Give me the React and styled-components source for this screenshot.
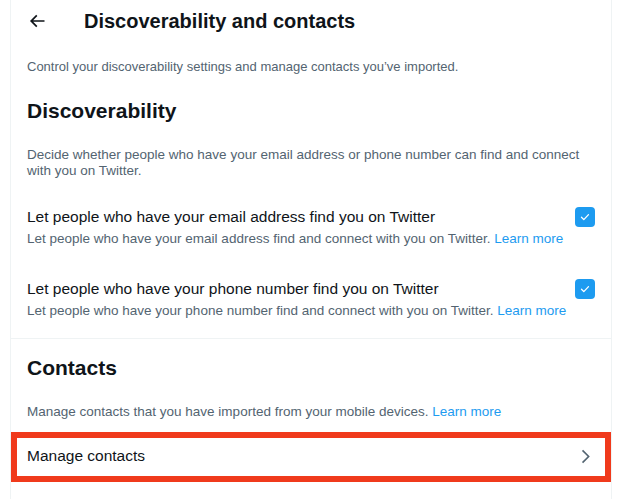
import { createGlobalStyle, styled } from 'styled-components'

const colors = {
    text: '#0f1419',
    secondary: '#536471',
    blue: '#1d9bf0',
    border: '#eff3f4',
    highlight: '#f03a1c',
}

const GlobalStyle = createGlobalStyle`
  body {
    margin: 0;
    background: #ffffff;
    font-family: "Liberation Sans", Arial, sans-serif;
    color: ${colors.text};
  }
`

const Page = styled.div`
    width: 600px;
    min-height: 499px;
    margin-left: 10px;
    border-left: 1px solid ${colors.border};
    border-right: 1px solid ${colors.border};
    box-sizing: content-box;
`
const Header = styled.header`
    height: 41px;
    display: flex;
    align-items: center;
    padding: 0 16px;
    gap: 37px;
`
const BackButton = styled.button`
    width: 20px;
    height: 20px;
    padding: 0;
    border: none;
    background: none;
    display: flex;
    align-items: center;
    justify-content: center;
    color: ${colors.text};
    cursor: pointer;
`
const PageTitle = styled.h1`
    margin: 0;
    font-size: 20px;
    line-height: 24px;
    font-weight: 700;
`
const Intro = styled.p`
    margin: 0;
    padding: 18px 16px 7px;
    font-size: 13px;
    line-height: 16px;
    color: ${colors.secondary};
`
const Section = styled.section`
    border-top: ${({ $divided }) => ($divided ? `1px solid ${colors.border}` : 'none')};
    padding-bottom: ${({ $divided }) => ($divided ? '0' : '3px')};
`
const SectionTitle = styled.h2`
    margin: 0;
    padding: 17px 16px 12px;
    font-size: 21px;
    line-height: 24px;
    font-weight: 700;
`
const SectionText = styled.p`
    margin: 0;
    padding: 12px 16px;
    font-size: 13.5px;
    line-height: 16px;
    color: ${colors.secondary};
`
const Link = styled.a`
    color: ${colors.blue};
    text-decoration: none;
`
const Option = styled.label`
    display: flex;
    align-items: flex-start;
    gap: 8px;
    padding: 16px;
    cursor: pointer;
`
const OptionBody = styled.div`
    flex: 1;
    display: flex;
    flex-direction: column;
    gap: 4px;
`
const OptionLabel = styled.span`
    font-size: 15.5px;
    line-height: 20px;
`
const OptionHint = styled.span`
    font-size: 13.5px;
    line-height: 16px;
    color: ${colors.secondary};
`
const Checkbox = styled.span`
    width: 20px;
    height: 20px;
    border-radius: 4px;
    background: ${({ $checked }) => ($checked ? colors.blue : 'transparent')};
    border: ${({ $checked }) => ($checked ? 'none' : `2px solid ${colors.secondary}`)};
    display: flex;
    align-items: center;
    justify-content: center;
    flex-shrink: 0;
`
const LinkRow = styled.a`
    display: flex;
    align-items: center;
    justify-content: space-between;
    padding: 14px 16px 16px;
    font-size: 15.5px;
    line-height: 20px;
    color: ${colors.text};
    text-decoration: none;
    box-shadow: ${({ $highlighted }) => ($highlighted ? `inset 0 0 0 6px ${colors.highlight}` : 'none')};
    cursor: pointer;
`

function ArrowLeft() {
    return (
        <svg width="20" height="20" viewBox="0 0 24 24" fill="currentColor">
            <path d="M7.414 13l5.043 5.04-1.414 1.42L3.586 12l7.457-7.46 1.414 1.42L7.414 11H21v2H7.414z" />
        </svg>
    )
}

function Chevron() {
    return (
        <svg width="19" height="19" viewBox="0 0 24 24" fill={colors.secondary}>
            <path d="M14.586 12L7.543 4.96l1.414-1.42L17.414 12l-8.457 8.46-1.414-1.42L14.586 12z" />
        </svg>
    )
}

function Check() {
    return (
        <svg width="12" height="12" viewBox="0 0 12 12" fill="none">
            <path d="M2.5 6.3l2.3 2.3 4.7-5" stroke="#ffffff" strokeWidth="1.3" strokeLinecap="round" strokeLinejoin="round" />
        </svg>
    )
}

const options = [
    {
        label: 'Let people who have your email address find you on Twitter',
        hint: 'Let people who have your email address find and connect with you on Twitter.',
    },
    {
        label: 'Let people who have your phone number find you on Twitter',
        hint: 'Let people who have your phone number find and connect with you on Twitter.',
    },
]

function App() {
    return (
        <>
            <GlobalStyle />
            <Page>
                <Header>
                    <BackButton aria-label="Back">
                        <ArrowLeft />
                    </BackButton>
                    <PageTitle>Discoverability and contacts</PageTitle>
                </Header>
                <Intro>Control your discoverability settings and manage contacts you’ve imported.</Intro>

                <Section>
                    <SectionTitle>Discoverability</SectionTitle>
                    <SectionText>
                        Decide whether people who have your email address or phone number can find and connect with you on Twitter.
                    </SectionText>
                    {options.map((option, index) => (
                        <Option key={`option-${index}`}>
                            <OptionBody>
                                <OptionLabel>{option.label}</OptionLabel>
                                <OptionHint>
                                    {option.hint} <Link href="#">Learn more</Link>
                                </OptionHint>
                            </OptionBody>
                            <Checkbox $checked>
                                <Check />
                            </Checkbox>
                        </Option>
                    ))}
                </Section>

                <Section $divided>
                    <SectionTitle>Contacts</SectionTitle>
                    <SectionText>
                        Manage contacts that you have imported from your mobile devices. <Link href="#">Learn more</Link>
                    </SectionText>
                    <LinkRow $highlighted>
                        <span>Manage contacts</span>
                        <Chevron />
                    </LinkRow>
                </Section>
            </Page>
        </>
    )
}
export default App
